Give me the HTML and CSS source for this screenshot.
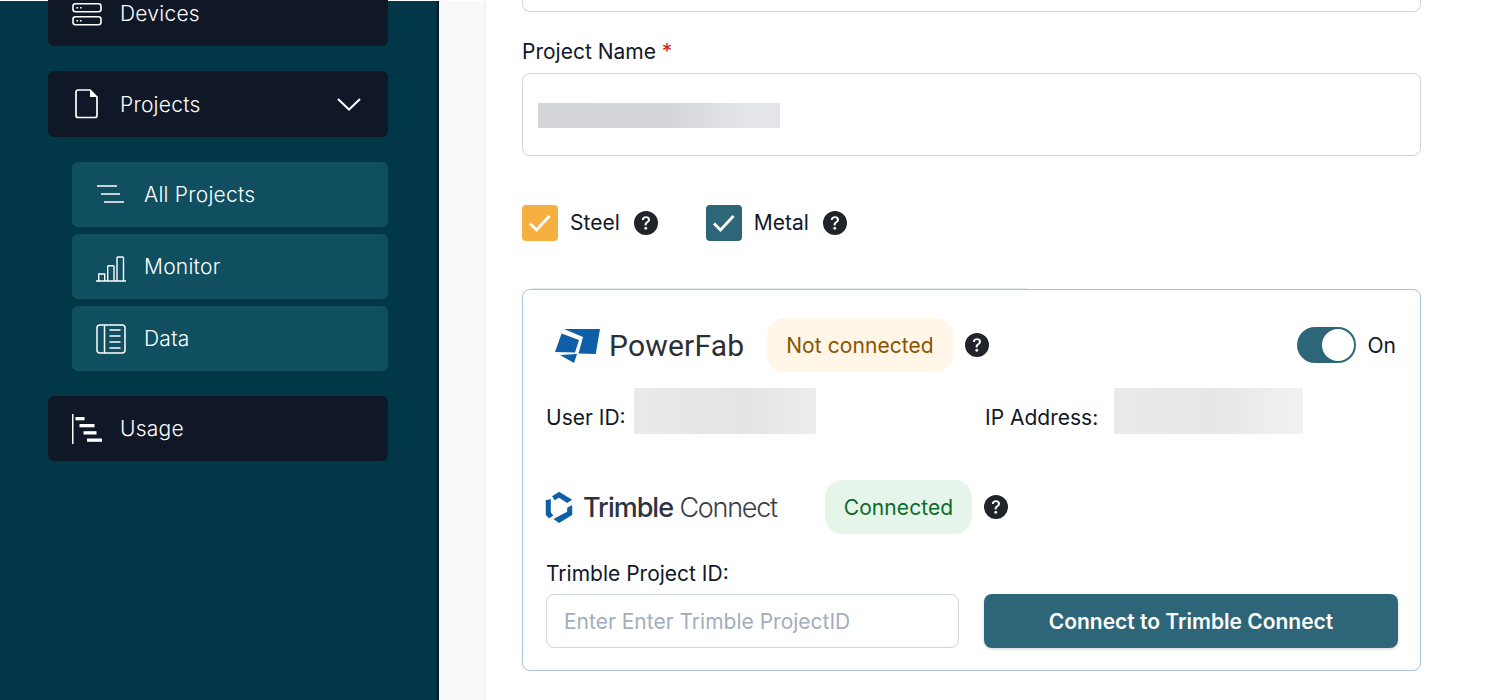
FILE: index.html
```html
<!DOCTYPE html>
<html lang="en">
<head>
<meta charset="utf-8">
<title>Project settings</title>
<link rel="stylesheet" href="styles.css">
</head>
<body>
<svg class="sprite" aria-hidden="true"><symbol id="q" viewBox="0 0 16 16"><path d="M16 8A8 8 0 1 1 0 8a8 8 0 0 1 16 0zM5.496 6.033h.825c.138 0 .248-.113.266-.25.09-.656.54-1.134 1.342-1.134.686 0 1.314.343 1.314 1.168 0 .635-.374.927-.965 1.371-.673.489-1.206 1.06-1.168 1.987l.003.217a.25.25 0 0 0 .25.246h.811a.25.25 0 0 0 .25-.25v-.105c0-.718.273-.927 1.01-1.486.609-.463 1.244-.977 1.244-2.056 0-1.511-1.276-2.241-2.673-2.241-1.267 0-2.655.59-2.75 2.286a.237.237 0 0 0 .241.247zm2.325 6.443c.61 0 1.029-.394 1.029-.927 0-.552-.42-.94-1.029-.94-.584 0-1.009.388-1.009.94 0 .533.425.927 1.01.927z"/></symbol></svg>
<div class="app">
  <aside class="sidebar">
    <nav class="nav">
      <a class="nav-item">
        <svg class="nav-icon" viewBox="0 2 30 24" fill="none" stroke="#fff" stroke-width="1.6"><rect x="1" y="3.800" width="28" height="8" rx="2.500"/><rect x="1" y="16.800" width="28" height="8" rx="2.500"/><path d="M4.500 7.800h1.600M8 7.800h1.600M4.500 20.800h1.600M8 20.800h1.600"/></svg>
        <span>Devices</span>
      </a>
      <a class="nav-item nav-open">
        <svg class="nav-icon" viewBox="1 0 30 30" fill="none" stroke="#fff" stroke-width="1.700"><path d="M7 1h12l7 7v18.500a2 2 0 0 1-2 2H7a2 2 0 0 1-2-2V3a2 2 0 0 1 2-2z"/><path d="M19 1v7h7z" fill="#fff" stroke="none"/></svg>
        <span>Projects</span>
        <svg class="chevron" viewBox="0 0 24 13" fill="none" stroke="#fff" stroke-width="2"><path d="M1 1l11 10.500L23 1"/></svg>
      </a>
      <div class="subnav">
        <a class="sub-item">
          <svg class="nav-icon" viewBox="0 0 30 30" fill="none" stroke="#fff" stroke-width="1.600"><path d="M1 6h20M5 14h19M8 22h20"/></svg>
          <span>All Projects</span>
        </a>
        <a class="sub-item">
          <svg class="nav-icon" viewBox="0 0 30 30" fill="none" stroke="#fff" stroke-width="1.400"><path d="M0 29h30M2.700 29v-7h6v7M11.700 29V14.500a.8.8 0 0 1 .8-.8h4.700a.8.8 0 0 1 .8.8V29M21 29V6a1 1 0 0 1 1-1h4.500a1 1 0 0 1 1 1v23"/></svg>
          <span>Monitor</span>
        </a>
        <a class="sub-item">
          <svg class="nav-icon" viewBox="0 0 30 30" fill="none" stroke="#fff" stroke-width="1.500"><rect x="1" y="1" width="28" height="28" rx="3"/><path d="M8.500 1v28M13.500 6h11M13.500 12h11M13.500 18h11M13.500 24h11"/></svg>
          <span>Data</span>
        </a>
      </div>
      <a class="nav-item">
        <svg class="nav-icon" viewBox="0 0 30 30" fill="#fff"><rect x="0" y="0" width="1.500" height="30"/><rect x="3.500" y="3" width="9" height="3.300"/><rect x="7.500" y="10" width="15" height="3.300"/><rect x="11.500" y="17.200" width="13" height="3.300"/><rect x="15" y="24.500" width="15" height="3.300"/></svg>
        <span>Usage</span>
      </a>
    </nav>
  </aside>
  <div class="gutter"></div>
  <main class="main">
    <div class="cut-input"></div>
    <label class="field-label">Project Name <b class="req">*</b></label>
    <div class="name-input"><div class="skeleton-name"></div></div>

    <div class="checks">
      <div class="check">
        <span class="box box-steel"><svg viewBox="0 0 36 36" fill="none" stroke="#fff" stroke-width="2.800"><path d="M8 18.500l6.500 6.500L27.500 11"/></svg></span>
        <span class="check-label">Steel</span>
        <svg class="help"><use href="#q"/></svg>
      </div>
      <div class="check">
        <span class="box box-metal"><svg viewBox="0 0 36 36" fill="none" stroke="#fff" stroke-width="2.800"><path d="M8 18.500l6.500 6.500L27.500 11"/></svg></span>
        <span class="check-label">Metal</span>
        <svg class="help"><use href="#q"/></svg>
      </div>
    </div>

    <section class="card">
      <div class="row row-powerfab">
        <div class="logo logo-powerfab">
          <svg class="pf-mark" viewBox="0 0 56 44" fill="#0f5fa8"><path d="M14 6H50L45.700 31 28.500 30.500 33 14z"/><path d="M11.600 10.600 29 17 25 29.500 5 29z"/><path d="M10 32 27 31 24 40z"/></svg>
          <span class="pf-text">PowerFab</span>
        </div>
        <span class="badge badge-warn">Not connected</span>
        <svg class="help"><use href="#q"/></svg>
        <div class="toggle-wrap">
          <span class="toggle"><span class="knob"></span></span>
          <span class="toggle-label">On</span>
        </div>
      </div>
      <div class="row row-creds">
        <div class="cred cred-user">
          <span class="cred-label">User ID:</span>
          <div class="skeleton-user"></div>
        </div>
        <div class="cred cred-ip">
          <span class="cred-label">IP Address:</span>
          <div class="skeleton-ip"></div>
        </div>
      </div>
      <div class="row row-trimble">
        <div class="logo logo-trimble">
          <svg class="tc-mark" viewBox="0 0 108 108" preserveAspectRatio="none" fill="#0f5fa8"><path d="M32 22 54 8 96 32 80 42 54 26 40 34z"/><path d="M96 48V78L54 102 36 90 80 68V56z"/><path d="M12 34 28 30V70L36 80 22 88 12 78z"/></svg>
          <span class="tc-text"><b>Trimble</b> Connect</span>
        </div>
        <span class="badge badge-ok">Connected</span>
        <svg class="help"><use href="#q"/></svg>
      </div>
      <label class="trimble-label">Trimble Project ID:</label>
      <div class="row row-connect">
        <input class="text-input" type="text" placeholder="Enter Enter Trimble ProjectID">
        <button class="btn" type="button">Connect to Trimble Connect</button>
      </div>
    </section>
  </main>
</div>
</body>
</html>
```

FILE: styles.css
```css
* { box-sizing: border-box; }
html, body { margin: 0; height: 700px; overflow: hidden; }
body { font-family: Inter, "Liberation Sans", sans-serif; font-size: 21px; color: #111827; background: #fff; }
.sprite { display: none; }
.app { display: flex; height: 700px; overflow: hidden; padding-top: 1px; }

.sidebar { width: 439px; flex: none; background: #013747; border-right: 2px solid #0f1828; }
.nav { display: flex; flex-direction: column; margin: -20px 49px 0 48px; }
.nav-item, .sub-item { display: flex; align-items: center; height: 65px; border-radius: 6px; color: #fff; font-weight: 300; font-size: 21px; letter-spacing: .25px; }
.nav-item { background: #101828; padding-left: 24px; margin-bottom: 25px; gap: 18px; }
.nav-open { height: 66px; }
.nav-item span { flex: none; }
.nav-icon { width: 30px; height: 30px; flex: none; }
.chevron { width: 24px; height: 13px; margin-left: auto; margin-right: 27px; }
.subnav { display: flex; flex-direction: column; gap: 7px; margin: 0 0 25px 24px; }
.sub-item { background: #104f60; padding-left: 24px; gap: 18px; }

.gutter { width: 47px; flex: none; background: #f8f9fb; border-right: 2px solid #f0f1f4; }
.main { width: 899px; margin-left: 36px; flex: none; }

.cut-input { height: 12px; margin-top: -1px; border: 1px solid #d0d5dd; border-top: 0; border-radius: 0 0 8px 8px; }
.field-label { display: block; margin-top: 27px; line-height: 26px; }
.req { color: #c81e1e; font-weight: 400; }
.name-input { height: 83px; margin-top: 8px; padding: 29px 15px 0; border: 1px solid #d0d5dd; border-radius: 8px; }

.skeleton-name { width: 242px; height: 25px; background: linear-gradient(90deg, #d4d5d9 0%, #d5d6da 55%, #e4e5e8 85%); }
.checks { display: flex; gap: 48px; margin-top: 49px; }
.check { display: flex; align-items: center; height: 36px; }
.box { display: block; width: 36px; height: 36px; border-radius: 4px; }
.box svg { display: block; width: 36px; height: 36px; }
.box-steel { background: #f5b041; }
.box-metal { background: #2c6678; }
.check-label { margin-left: 12px; margin-right: 14px; padding-bottom: 2px; }
.help { display: block; width: 24px; height: 24px; flex: none; fill: #212529; }

.card { position: relative; height: 382px; margin-top: 48px; padding: 28px 22px 0 23px; border: 1px solid #a9c1d4; border-radius: 8px; }
.card::before { content: ""; position: absolute; top: -2px; left: 8px; width: 496px; height: 1px; background: #e3ebf1; }
.row { display: flex; align-items: center; }
.row-powerfab { height: 54px; }
.logo { display: flex; align-items: center; }
.logo-powerfab { width: 221px; padding-left: 4px; }
.pf-mark { width: 56px; height: 44px; flex: none; }
.pf-text { margin-left: 3px; font-family: Roboto, sans-serif; font-size: 30px; font-weight: 400; color: #2b3036; letter-spacing: .2px; }
.badge { display: flex; align-items: center; justify-content: center; height: 54px; border-radius: 18px; font-size: 21px; letter-spacing: .08px; }
.badge-warn { width: 186px; background: #fff6e8; color: #8a5300; margin-right: 12px; }
.badge-ok { width: 147px; background: #e6f5ea; color: #0b6b2b; margin-right: 12px; }
.toggle-wrap { display: flex; align-items: center; margin-left: auto; margin-right: 2px; }
.toggle { display: block; width: 59px; height: 36px; border-radius: 18px; padding: 2px; background: #2c6678; }
.knob { display: block; width: 32px; height: 32px; margin-left: 23px; border-radius: 50%; background: #fff; }
.toggle-label { margin-left: 12px; }

.row-creds { height: 46px; margin-top: 16px; }
.cred { display: flex; align-items: center; height: 46px; }
.cred-label { padding-top: 12px; }
.cred-user { width: 439px; gap: 8px; }
.cred-ip { gap: 16px; }
.skeleton-user { width: 182px; height: 46px; background: linear-gradient(90deg, #e9eaec 0%, #e3e4e6 60%, #ecedee 100%); }
.skeleton-ip { width: 189px; height: 46px; background: linear-gradient(90deg, #e9eaec 0%, #e6e7e9 55%, #f1f2f2 100%); }

.row-trimble { height: 54px; margin-top: 46px; }
.logo-trimble { width: 283px; margin-left: -4px; gap: 7px; }
.tc-mark { width: 34px; height: 36px; flex: none; }
.tc-text { font-family: Inter, sans-serif; font-size: 27px; font-weight: 300; color: #3a3d46; white-space: nowrap; letter-spacing: -1.25px; }
.tc-text b { font-weight: 500; color: #2f3240; letter-spacing: -1px; }

.trimble-label { display: block; margin-top: 27px; line-height: 26px; }
.row-connect { gap: 25px; margin-top: 7px; }
.text-input { width: 413px; height: 54px; padding: 0 17px; border: 1px solid #d0d5e0; border-radius: 8px; font: 400 21px Inter, sans-serif; color: #111827; background: #fff; outline: 0; }
.text-input::placeholder { color: #a3adbd; opacity: 1; }
.btn { width: 414px; height: 54px; border: 0; border-radius: 8px; background: #2c6678; color: #fff; font: 600 21px Inter, sans-serif; box-shadow: 0 1px 3px rgba(16,24,40,.2); }
```
